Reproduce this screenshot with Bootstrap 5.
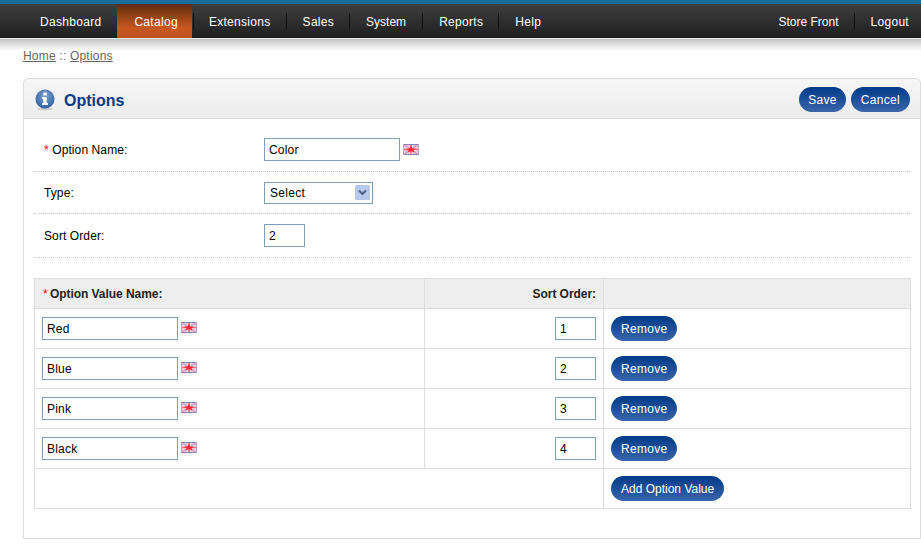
<!DOCTYPE html>
<html lang="en">
<head>
  <meta charset="UTF-8" />
  <meta name="viewport" content="width=device-width, initial-scale=1" />
  <title>Options</title>
  <link href="https://cdn.jsdelivr.net/npm/bootstrap@5.3.0/dist/css/bootstrap.min.css" rel="stylesheet" />
  <style>
    body { font-family: "Liberation Sans", Arial, sans-serif; font-size: 12px; color: #000; background: #fff; overflow-x: hidden; }
    .top-strip { height: 4px; background: #1a6a9a; }
    .top-menu { height: 34px; background: linear-gradient(#3f3f3f, #1f1f1f); padding-left: 23px; align-items: stretch; }
    .top-shadow { height: 13px; border-top: 1px solid #e8e8e8; background: linear-gradient(#c4c4c4, #fff); }
    .top-menu .nav-link { color: #fff; font-size: 12px; letter-spacing: .3px; padding: 1px 16px 0; display: flex; align-items: center; position: relative; height: 34px; }
    .top-menu .nav-link.sep::after { content: ""; position: absolute; right: 0; top: 9px; height: 16px; width: 1px; background: #111; }
    .top-menu .nav-link.first-link { padding-left: 17px; }
    .top-menu .nav-link.active { background: linear-gradient(#5e2a0e, #c9571f 70%, #bd521d); padding: 1px 14px 0 17px; }
    .top-menu .nav-link.after-active { padding-left: 17px; }
    .top-menu .nav-link.after-active::before { content: ""; position: absolute; left: 1px; top: 9px; height: 16px; width: 1px; background: #111; }
    .top-menu .nav-link.tight-link { letter-spacing: 0; padding-right: 17px; }
    .top-menu .nav-link.store-link { letter-spacing: 0; padding-right: 17px; }
    .top-menu .nav-link.last-link { padding: 1px 12px 0 15px; }
    .crumbs { padding: 0 0 0 23px; margin-top: -4px; height: 31px; color: #666; letter-spacing: .2px; }
    .crumbs a { color: #666; }
    .opt-box { margin-left: 23px; height: 461px; border: 1px solid #dbdbdb; border-radius: 5px 5px 0 0; }
    .opt-head { height: 40px; background: linear-gradient(#f6f6f6, #ececec); border-bottom: 1px solid #dbdbdb; border-radius: 5px 5px 0 0; padding: 2px 10px 0 11px; }
    .opt-title { font-size: 16px; font-weight: 700; color: #003a88; margin: 2px 0 0 9px; }
    .blue-btn { color: #fff; font-size: 12px; letter-spacing: .3px; height: 25px; line-height: 26px; padding: 0 10px; border: 0; background: linear-gradient(#003a88, #3a65ab); border-radius: 12.5px; }
    .blue-btn:hover { color: #fff; background: linear-gradient(#003a88, #3a65ab); }
    .blue-btn.save-btn { padding: 0 9px; margin-right: 5px; }
    .blue-btn.add-btn { letter-spacing: 0; }
    .form-area { padding: 9px 10px 0; }
    .form-line { border-bottom: 1px dotted #ccc; padding-left: 10px; align-items: center; }
    .form-line label { width: 220px; margin: 0; letter-spacing: .1px; }
    .line-name { height: 44px; }
    .line-type { height: 42px; }
    .req { color: #f00; }
    .plain-input { font-size: 12px; padding: 1px 4px; border: 1px solid #7f9db9; border-radius: 0; color: #000; height: 23px; letter-spacing: .2px; }
    .plain-input.name-input { width: 136px; }
    .plain-input.sort-input { width: 41px; }
    .type-select { width: 109px; height: 22px; appearance: none; padding: 1px 5px; border: 1px solid #7f9db9; font-size: 12px; border-radius: 0; color: #000; letter-spacing: .3px; background: #fff url("data:image/svg+xml,%3Csvg xmlns='http://www.w3.org/2000/svg' width='15' height='15'%3E%3Crect width='15' height='15' rx='1.5' fill='%23b5c9ef'/%3E%3Cpath d='M4 5.5l3.5 3.5 3.5-3.5' fill='none' stroke='%234d6185' stroke-width='2'/%3E%3C/svg%3E") no-repeat right 2px center; }
    .flag-icon { width: 16px; height: 11px; margin-left: 3px; vertical-align: 0; }
    .value-table { width: 877px; margin: 20px 0 0; border-color: #ddd; table-layout: fixed; font-size: 12px; }
    .value-table > :not(caption) > * > * { padding: 0 7px; vertical-align: middle; height: 40px; box-shadow: none; }
    .value-table thead th { height: 30px; background: #eee; color: #222; letter-spacing: -.05px; }
    .value-table thead .req { font-weight: 400; margin: 0 -1px 0 1px; }
    .value-table .col-a { width: 390px; }
    .value-table .col-b { width: 179px; }
  </style>
</head>
<body>
  <svg width="0" height="0" class="d-block">
    <symbol id="gb-flag" viewBox="0 0 16 11">
      <rect width="16" height="11" fill="#f6ccda"/>
      <path d="M0 0l16 11M16 0L0 11" stroke="#c4c4ee" stroke-width="2.4"/>
      <path d="M0 0l16 11M16 0L0 11" stroke="#f490a4" stroke-width="1"/>
      <path d="M8 0v11M0 5.500h16" stroke="#fbe4e8" stroke-width="3"/>
      <path d="M8 1v9M1 5.500h14" stroke="#f76a78" stroke-width="1.600"/>
      <path d="M8 2l1.500 2.200 3.500.5-2.500 1.300 1 2.500L8 7.300l-3.500 1.200 1-2.500L3 4.700l3.500-.5z" fill="#f52a3a"/>
      <path d="M0 .5h16M0 10.500h16" stroke="#8684b0"/>
      <path d="M.5 0v11M15.500 0v11" stroke="#b8a0c0"/>
    </symbol>
  </svg>

  <div class="top-strip"></div>
  <ul class="nav top-menu d-flex justify-content-between">
    <li class="d-flex">
      <a class="nav-link first-link" href="#">Dashboard</a>
      <a class="nav-link active" href="#">Catalog</a>
      <a class="nav-link sep after-active" href="#">Extensions</a>
      <a class="nav-link sep" href="#">Sales</a>
      <a class="nav-link sep tight-link" href="#">System</a>
      <a class="nav-link sep" href="#">Reports</a>
      <a class="nav-link" href="#">Help</a>
    </li>
    <li class="d-flex">
      <a class="nav-link sep store-link" href="#">Store Front</a>
      <a class="nav-link last-link" href="#">Logout</a>
    </li>
  </ul>
  <div class="top-shadow"></div>

  <div class="crumbs"><a href="#">Home</a> :: <a href="#">Options</a></div>

  <div class="opt-box">
    <div class="opt-head d-flex align-items-center">
      <svg width="20" height="22" viewBox="0 0 20 22">
        <defs>
          <radialGradient id="info-fill" cx="50%" cy="35%" r="65%">
            <stop offset="0" stop-color="#7da3d3"/>
            <stop offset="1" stop-color="#2f5f9f"/>
          </radialGradient>
        </defs>
        <ellipse cx="10" cy="20" rx="8" ry="1.5" fill="#ccc"/>
        <circle cx="10" cy="10" r="9.5" fill="url(#info-fill)"/>
        <rect x="8.3" y="3.5" width="3.4" height="3" fill="#fff"/>
        <path d="M7 8h4.700v6H13v2H7v-2h1.300v-4H7z" fill="#fff"/>
      </svg>
      <h1 class="opt-title flex-grow-1">Options</h1>
      <a class="btn blue-btn save-btn" href="#">Save</a>
      <a class="btn blue-btn" href="#">Cancel</a>
    </div>

    <form class="form-area">
      <div class="form-line line-name d-flex">
        <label><span class="req">*</span> Option Name:</label>
        <input class="form-control d-inline-block plain-input name-input" value="Color" />
        <svg class="flag-icon"><use href="#gb-flag"/></svg>
      </div>
      <div class="form-line line-type d-flex">
        <label>Type:</label>
        <select class="form-select type-select"><option>Select</option></select>
      </div>
      <div class="form-line line-name d-flex">
        <label>Sort Order:</label>
        <input class="form-control plain-input sort-input" value="2" />
      </div>

      <table class="table table-bordered value-table">
        <thead>
          <tr>
            <th class="col-a"><span class="req">*</span> Option Value Name:</th>
            <th class="col-b text-end">Sort Order:</th>
            <th></th>
          </tr>
        </thead>
        <tbody id="valueRows"></tbody>
        <tfoot>
          <tr>
            <td colspan="2"></td>
            <td><a class="btn blue-btn add-btn" href="#">Add Option Value</a></td>
          </tr>
        </tfoot>
      </table>
    </form>
  </div>

  <script src="https://cdn.jsdelivr.net/npm/bootstrap@5.3.0/dist/js/bootstrap.bundle.min.js"></script>
  <script>
    const values = ["Red", "Blue", "Pink", "Black"];
    document.getElementById("valueRows").innerHTML = values.map((v, i) => `
      <tr>
        <td><input class="form-control d-inline-block plain-input name-input" value="${v}" /><svg class="flag-icon"><use href="#gb-flag"/></svg></td>
        <td class="text-end"><input class="form-control d-inline-block plain-input sort-input" value="${i + 1}" /></td>
        <td><a class="btn blue-btn" href="#">Remove</a></td>
      </tr>`).join("");
  </script>
</body>
</html>
